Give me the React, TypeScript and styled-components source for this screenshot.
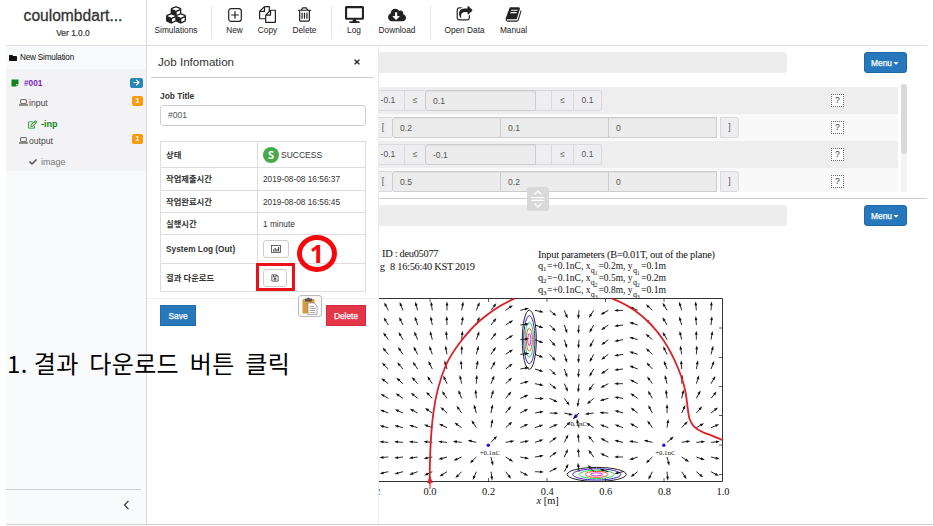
import React from 'react';
import styled, { createGlobalStyle } from 'styled-components';
import {
  FaCubes, FaDesktop, FaCloudDownloadAlt, FaFolder, FaStickyNote,
  FaArrowRight, FaRegEdit, FaCheck, FaTimes, FaRegSave, FaCaretDown,
} from 'react-icons/fa';

const GlobalStyle = createGlobalStyle`
  * { box-sizing: border-box; }
  body { margin: 0; background: #fff; color: #333; font: 8.6px/12px "Liberation Sans", "Noto Sans CJK KR", sans-serif; }
  svg { display: block; flex: none; }
`;

const Screen = styled.div`
  position: relative;
  width: 934px;
  height: 526px;
  display: flex;
  overflow: hidden;
  padding-left: 6px;
  border-right: 1px solid #d4d4d6;
`;
const Sidebar = styled.aside`
  width: 141px;
  height: 525px;
  flex: none;
  display: flex;
  flex-direction: column;
  background: #f9fafc;
  border-right: 1px solid #d9dae2;
  border-bottom: 1px solid #d0d0d2;
`;
const Brand = styled.header`
  height: 46px;
  background: #fff;
  border-bottom: 1px solid #dcdde4;
  text-align: center;
  padding: 6px 6px 0 0;
`;
const BrandName = styled.div`
  font-size: 15.6px;
  line-height: 19px;
  -webkit-text-stroke: 0.3px #333;
`;
const Version = styled.div`
  font-size: 8.4px;
  line-height: 16px;
  -webkit-text-stroke: 0.2px #333;
`;
const NewSimulation = styled.div`
  height: 23px;
  display: flex;
  align-items: center;
  gap: 3px;
  padding-left: 3px;
  font-size: 8.2px;
  letter-spacing: -0.2px;
  color: #111;
`;
const Tree = styled.nav`
  height: 102px;
  background: #f3f3f5;
  padding-top: 4px;
`;
const TreeRow = styled.div<{ $indent: number; $height: number; $gap?: number }>`
  height: ${p => p.$height}px;
  display: flex;
  align-items: center;
  gap: ${p => p.$gap ?? 1}px;
  padding: 0 3px 0 ${p => p.$indent}px;
`;
const TreeText = styled.span<{ $color: string; $bold?: boolean; $size?: number }>`
  flex: 1;
  color: ${p => p.$color};
  font-size: ${p => p.$size ?? 8.6}px;
  font-weight: ${p => (p.$bold ? 700 : 400)};
`;
const Badge = styled.span<{ $bg: string; $width: number }>`
  width: ${p => p.$width}px;
  height: 10px;
  margin-bottom: ${p => (p.$width > 12 ? 0 : 4)}px;
  border-radius: 2px;
  background: ${p => p.$bg};
  color: #fff;
  font-size: 7px;
  font-weight: 700;
  display: flex;
  align-items: center;
  justify-content: center;
`;
const Collapse = styled.div`
  margin: auto 5px 0 0;
  height: 35px;
  border-top: 1px solid #cfcfd1;
  display: flex;
  align-items: center;
  justify-content: flex-end;
  padding: 0 11px 4px 0;
`;
const Page = styled.div`
  flex: 1;
  height: 525px;
  display: flex;
  flex-direction: column;
  border-bottom: 1px solid #d0d0d2;
`;
const Toolbar = styled.div`
  height: 46px;
  width: 780px;
  flex: none;
  display: flex;
  align-items: center;
  border-bottom: 1px solid #dcdde4;
`;
const Tool = styled.div<{ $width: number }>`
  width: ${p => p.$width}px;
  display: flex;
  flex-direction: column;
  align-items: center;
  gap: 1px;
  padding-bottom: 3px;
  font-size: 8.3px;
  white-space: nowrap;
  color: #222;
`;
const IconSlot = styled.div`
  height: 17px;
  display: flex;
  align-items: center;
`;
const Rule = styled.div`
  width: 1px;
  height: 33px;
  background: #e4e4e6;
`;
const Body = styled.div`
  flex: 1;
  display: flex;
  min-height: 0;
`;
const JobPanel = styled.section`
  width: 232px;
  flex: none;
  border-right: 1px solid #ececee;
`;
const JobHead = styled.div`
  height: 32px;
  margin: 0 4px;
  padding: 0 13px 0 7px;
  border-bottom: 1px solid #cfcfd1;
  display: flex;
  align-items: center;
  justify-content: space-between;
  font-size: 11.6px;
`;
const JobBody = styled.div`
  padding: 12px 12px 0 13px;
`;
const Label = styled.div`
  font-weight: 700;
  font-size: 8.4px;
  height: 15px;
`;
const Field = styled.div`
  height: 21px;
  border: 1px solid #cfcfd1;
  border-radius: 3px;
  padding-left: 7px;
  line-height: 19px;
  color: #555;
`;
const InfoTable = styled.div`
  display: grid;
  grid-template-columns: 97px 1fr;
  grid-template-rows: 26px 23px 22px 22px 29px 28px;
  margin-top: 15px;
  border: 1px solid #dddde0;
  border-bottom: 0;
`;
const InfoCell = styled.div<{ $head?: boolean }>`
  border-bottom: 1px solid #dddde0;
  border-right: ${p => (p.$head ? '1px solid #dddde0' : '0')};
  padding-left: 5px;
  display: flex;
  align-items: center;
  gap: 2px;
  font-size: ${p => (p.$head ? 8.3 : 8.3)}px;
  font-weight: ${p => (p.$head ? 700 : 400)};
`;
const StatusDot = styled.span`
  width: 16px;
  height: 16px;
  border-radius: 50%;
  background: #43ab47;
  color: #fff;
  font: 700 11px/16px "Open Sans", sans-serif;
  text-align: center;
`;
const StatusText = styled.span`
  font-size: 8.5px;
`;
const SmallButton = styled.span<{ $width: number }>`
  width: ${p => p.$width}px;
  height: 18px;
  border: 1px solid #ccc;
  border-radius: 3px;
  display: flex;
  align-items: center;
  justify-content: center;
`;
const JobFoot = styled.div`
  margin-top: 6px;
  border-top: 1px solid #f0f0f0;
  padding: 6px 12px 0 13px;
  display: flex;
  justify-content: space-between;
`;
const Action = styled.button<{ $bg: string; $width: number }>`
  width: ${p => p.$width}px;
  height: 21px;
  border: 1px solid rgba(0, 0, 0, 0.1);
  background: ${p => p.$bg};
  color: #fff;
  font: 8.4px "Liberation Sans", sans-serif;
  padding: 0;
  -webkit-text-stroke: 0.25px #fff;
`;
const Main = styled.main`
  width: 548px;
  display: flex;
  flex-direction: column;
  min-width: 0;
`;
const PaneHead = styled.div`
  padding: 6px 20px 0 0;
  display: flex;
  justify-content: space-between;
`;
const PaneBar = styled.div`
  width: 408px;
  height: 21px;
  background: #ededed;
  border-radius: 0 3px 3px 0;
`;
const MenuButton = styled.button`
  width: 43px;
  height: 21px;
  border: 1px solid #1f68a8;
  border-radius: 3px;
  background: #2777bc;
  color: #fff;
  font: 8.4px "Liberation Sans", sans-serif;
  padding: 0;
  display: flex;
  align-items: center;
  justify-content: center;
  -webkit-text-stroke: 0.25px #fff;
`;
const ParamScroller = styled.div`
  height: 108px;
  margin: 11px 20px 0 0;
  display: flex;
  justify-content: space-between;
`;
const ParamRows = styled.div`
  width: 519px;
  padding-top: 3px;
  overflow: hidden;
`;
const ParamRow = styled.div<{ $odd: boolean }>`
  height: 27px;
  display: flex;
  align-items: center;
  background: ${p => (p.$odd ? '#eeeeee' : '#f9f9f9')};
`;
const Group = styled.div`
  width: 452px;
  display: flex;
`;
const Addon = styled.div<{ $width: number; $gap?: number; $first?: boolean; $end?: boolean; $pull?: number }>`
  width: ${p => p.$width}px;
  height: 21px;
  margin-left: ${p => p.$gap ?? 0}px;
  padding-right: ${p => p.$pull ?? 0}px;
  border: 1px solid #dadade;
  border-left-width: ${p => (p.$gap ? 1 : 0)}px;
  border-right-width: ${p => (p.$first ? 0 : 1)}px;
  border-radius: ${p => (p.$end ? '0 3px 3px 0' : 0)};
  background: #eeeef0;
  color: #555;
  line-height: 19px;
  text-align: center;
`;
const Value = styled.div<{ $width: number; $left?: boolean }>`
  width: ${p => p.$width}px;
  height: 21px;
  border: 1px solid #cdcdd0;
  border-left-width: ${p => (p.$left ? 1 : 0)}px;
  border-radius: ${p => (p.$left ? '3px 0 0 3px' : 0)};
  background: #ececec;
  box-shadow: inset 0 1px 1px rgba(0, 0, 0, 0.06);
  padding-left: 7px;
  line-height: 20px;
  color: #555;
`;
const Help = styled.span`
  width: 13px;
  height: 13px;
  border: 1px dotted #666;
  background: #fff;
  font-size: 8.6px;
  line-height: 11px;
  text-align: center;
`;
const Track = styled.div`
  width: 6px;
  background: #f3f3f3;
`;
const Thumb = styled.div`
  height: 70px;
  border-radius: 3px;
  background: #d9d9d9;
`;
const Divider = styled.div`
  height: 1px;
  flex: none;
  margin-top: 6px;
  background: #cfcfd1;
`;
const Handle = styled.div`
  position: absolute;
  left: 527px;
  top: 187px;
  width: 22px;
  height: 24px;
  border-radius: 3px;
  background: #d9d9d9;
`;
const Clipboard = styled.div`
  position: absolute;
  left: 298px;
  top: 295px;
  width: 24px;
  height: 22px;
  border: 1px solid #bbb;
  border-radius: 3px;
  background: #fafafa;
  display: flex;
  align-items: center;
  justify-content: center;
`;
const RedBox = styled.div`
  position: absolute;
  left: 256px;
  top: 263px;
  width: 39px;
  height: 28px;
  border: 3px solid #ee1018;
`;
const StepMark = styled.div`
  position: absolute;
  left: 297px;
  top: 235px;
  width: 40px;
  height: 37px;
  border: 5px solid #f6070c;
  border-radius: 50%;
  color: #f6070c;
  font: 700 25px/26px "Noto Sans", sans-serif;
  text-align: center;
`;
const Caption = styled.div`
  position: absolute;
  left: 7px;
  top: 346px;
  display: flex;
  gap: 6px;
  color: #000;
  font: 24px/34px "Noto Sans CJK KR", sans-serif;
  letter-spacing: 0.35px;
  word-spacing: 5px;
  white-space: nowrap;
`;

const TRASH = 'M704 736v576q0 14-9 23t-23 9h-64q-14 0-23-9t-9-23v-576q0-14 9-23t23-9h64q14 0 23 9t9 23zm256 0v576q0 14-9 23t-23 9h-64q-14 0-23-9t-9-23v-576q0-14 9-23t23-9h64q14 0 23 9t9 23zm256 0v576q0 14-9 23t-23 9h-64q-14 0-23-9t-9-23v-576q0-14 9-23t23-9h64q14 0 23 9t9 23zm128 724v-948h-896v948q0 22 7 40.500t14.500 27 10.500 8.500h832q3 0 10.500-8.500t14.500-27 7-40.500zm-672-1076h448l-48-117q-7-9-17-11h-317q-10 2-17 11zm928 32v64q0 14-9 23t-23 9h-96v948q0 83-47 143.500t-113 60.500h-832q-66 0-113-58.500t-47-141.500v-952h-96q-14 0-23-9t-9-23v-64q0-14 9-23t23-9h309l70-167q15-37 54-63t79-26h320q40 0 79 26t54 63l70 167h309q14 0 23 9t9 23z';
const FILES = 'M1696 384q40 0 68 28t28 68v1216q0 40-28 68t-68 28h-960q-40 0-68-28t-28-68v-288h-544q-40 0-68-28t-28-68v-672q0-40 20-88t48-76l408-408q28-28 76-48t88-20h416q40 0 68 28t28 68v328q68-40 128-40h416zm-544 213l-299 299h299v-299zm-640-384l-299 299h299v-299zm196 647l316-316v-416h-384v416q0 40-28 68t-68 28h-416v640h512v-256q0-40 20-88t48-76zm956 804v-1152h-384v416q0 40-28 68t-68 28h-416v640h896z';
const SHARE = 'M1472 989v259q0 119-84.500 203.500t-203.500 84.500h-832q-119 0-203.500-84.500t-84.500-203.500v-832q0-119 84.500-203.500t203.500-84.500h255q13 0 22.500 9.500t9.500 22.500q0 27-26 32-77 26-133 60-10 4-16 4h-112q-66 0-113 47t-47 113v832q0 66 47 113t113 47h832q66 0 113-47t47-113v-214q0-19 18-29 28-13 54-37 16-16 35-8 21 9 21 29zm237-496l-384 384q-18 19-45 19-12 0-25-5-39-17-39-59v-192h-160q-323 0-438 131-119 137-74 473 3 23-20 34-8 2-12 2-16 0-26-13-10-14-21-31t-39.500-68.500-49.500-99.500-38.500-114-17.500-122q0-49 3.500-91t14-90 28-88 47-81.500 68.500-74 94.500-61.500 124.500-48.500 159.500-30.500 196.500-11h160v-192q0-42 39-59 13-5 25-5 26 0 45 19l384 384q19 19 19 45t-19 45z';
const BOOK = 'M1703 478q40 57 18 129l-275 906q-19 64-76.500 107.500t-122.500 43.500h-923q-77 0-148.500-53.500t-99.500-131.500q-24-67-2-127 0-4 3-27t4-37q1-8-3-21.500t-3-19.500q2-11 8-21t16.500-23.500 16.500-23.500q23-38 45-91.500t30-91.500q3-10 .5-30t-.5-28q3-11 17-28t17-23q21-36 42-92t25-90q1-9-2.500-32t.5-28q4-13 22-30.500t22-22.500q19-26 42.500-84.500t27.500-96.500q1-8-3-25.500t-2-26.500q2-8 9-18t18-23 17-21q8-12 16.500-30.500t15-35 16-36 19.500-32 26.500-23.500 36-11.500 47.500 5.500l-1 3q38-9 51-9h761q74 0 114 56t18 130l-274 906q-36 119-71.500 153.500t-128.500 34.500h-869q-27 0-38 15-11 16-1 43 24 70 144 70h923q29 0 56-15.500t35-41.500l300-987q7-22 5-57 38 15 59 43zm-1064 2q-4 13 2 22.500t20 9.500h608q13 0 25.500-9.500t16.500-22.500l21-64q4-13-2-22.500t-20-9.500h-608q-13 0-25.500 9.500t-16.500 22.500zm-83 256q-4 13 2 22.500t20 9.500h608q13 0 25.500-9.500t16.500-22.500l21-64q4-13-2-22.500t-20-9.500h-608q-13 0-25.500 9.500t-16.500 22.500z';

const Glyph = ({ d, size }: { d: string; size: number }) => (
  <svg width={size} height={size} viewBox="0 0 1792 1792" fill="#222"><path d={d} /></svg>
);
const PlusSquare = () => (
  <svg width="14" height="14" viewBox="0 0 14 14" fill="none" stroke="#222" strokeWidth="1.200">
    <rect x="0.700" y="0.700" width="12.600" height="12.600" rx="2.400" /><path d="M7 3.200v7.600M3.200 7h7.600" />
  </svg>
);
const Laptop = () => (
  <svg width="9" height="7" viewBox="0 0 9 7" fill="none" stroke="#444" strokeWidth="0.8">
    <rect x="1.6" y="0.6" width="5.8" height="4" rx="0.5" /><path d="M0 6h9" strokeWidth="1.1" />
  </svg>
);

const tools = [
  { label: 'Simulations', gap: 0, width: 58, icon: <FaCubes size={20} color="#222" /> },
  { gap: 6 },
  { label: 'New', gap: 6, width: 33, icon: <PlusSquare /> },
  { label: 'Copy', gap: 0, width: 33, icon: <Glyph d={FILES} size={17} /> },
  { label: 'Delete', gap: 0, width: 41, icon: <Glyph d={TRASH} size={17} /> },
  { gap: 6 },
  { label: 'Log', gap: 6, width: 32, icon: <FaDesktop size={19} color="#222" /> },
  { label: 'Download', gap: 0, width: 54, icon: <FaCloudDownloadAlt size={18} color="#222" /> },
  { gap: 6 },
  { label: 'Open Data', gap: 5, width: 57, icon: <Glyph d={SHARE} size={17} /> },
  { label: 'Manual', gap: 0, width: 41, icon: <Glyph d={BOOK} size={17} /> },
];
const Spacer = styled.span<{ $width: number }>`
  width: ${p => p.$width}px;
`;

/* Plot geometry, in pixels of the page */
const charges = [
  { x: 488.3, y: 445.2, q: 1, label: '+0.1nC' },
  { x: 576, y: 416, q: -1, label: '-0.1nC' },
  { x: 663.8, y: 445.2, q: 1, label: '+0.1nC' },
];
const arrows = Array.from({ length: 23 * 12 }, (_, i) => {
  const x = 388.3 + (i % 23) * 14.67;
  const y = 471.7 - Math.floor(i / 23) * 14.67;
  let ex = 0;
  let ey = 0;
  charges.forEach(c => {
    const r = Math.hypot(x - c.x, y - c.y) ** 3;
    ex += (c.q * (x - c.x)) / r;
    ey += (c.q * (y - c.y)) / r;
  });
  return { x, y, angle: (Math.atan2(ey, ex) * 180) / Math.PI };
});
const rings = [
  ['#222', 29.5, 7], ['#3a22c8', 24, 5.6], ['#2fd45a', 17.5, 4.2], ['#e8642c', 11.5, 3], ['#e61ee0', 6, 1.5],
] as const;
const chargeLines = [
  { y: 268.5, n: '1', q: '=+0.1nC', x: '0.2m', v: '0.1m' },
  { y: 280.5, n: '2', q: '=−0.1nC', x: '0.5m', v: '0.2m' },
  { y: 292.7, n: '3', q: '=+0.1nC', x: '0.8m', v: '0.1m' },
];

const Plot = styled.svg`
  font-family: "Liberation Serif", serif;
  font-size: 10.4px;
  fill: #111;
`;

function FieldPlot() {
  return (
    <Plot width="548" height="298" viewBox="379 226 548 298">
      <text x="382" y="257" textLength="56.500">{'ID : deu05077'}</text>
      <text x="374" y="270" textLength="11">ug</text>
      <text x="390" y="270" textLength="85">8 16:56:40 KST 2019</text>
      <text x="538" y="257.500" textLength="177">Input parameters (B=0.01T, out of the plane)</text>
      {chargeLines.map(l => (
        <g key={l.n}>
          <text x="538" y={l.y}>q</text><text x="543" y={l.y + 2.5} fontSize="7">{l.n}</text>
          <text x="547" y={l.y} textLength="43.500" lengthAdjust="spacingAndGlyphs">{`${l.q}, x`}</text>
          <text x="590.700" y={l.y + 4} fontSize="8">q</text><text x="594.700" y={l.y + 6} fontSize="5.500">{l.n}</text>
          <text x="598.500" y={l.y} textLength="34" lengthAdjust="spacingAndGlyphs">{`=${l.x}, y`}</text>
          <text x="633" y={l.y + 4} fontSize="8">q</text><text x="637" y={l.y + 6} fontSize="5.500">{l.n}</text>
          <text x="641" y={l.y} textLength="25" lengthAdjust="spacingAndGlyphs">{`=${l.v}`}</text>
        </g>
      ))}
      <path d="M379 298.500H722.500V481.500H379" fill="none" stroke="#333" />
      {[430, 488.5, 547, 605.5, 664].map(x => (
        <path key={x} d={`M${x} 299v3M${x} 481v-3`} stroke="#333" strokeWidth="0.8" />
      ))}
      {[328, 357.5, 386.5, 415.5, 445, 474.5].map(y => (
        <path key={y} d={`M722 ${y}h-3`} stroke="#333" strokeWidth="0.8" />
      ))}
      {rings.map(([color, a, b]) => (
        <g key={color} fill="none" stroke={color} strokeWidth="1">
          <ellipse cx="529.300" cy="339.700" rx={b} ry={a} />
          <ellipse cx="596.700" cy="474.400" rx={a} ry={b} />
        </g>
      ))}
      {arrows.map((a, i) => (
        <g key={i} transform={`translate(${a.x} ${a.y}) rotate(${a.angle})`}>
          <path d="M0 0H6" stroke="#111" strokeWidth="0.85" />
          <path d="M8.900 0L4.900 -1.400V1.400Z" fill="#111" />
        </g>
      ))}
      <g fill="none" stroke="#da2228" strokeWidth="1.8">
        <path d="M429.700 484C429.700 465 430.500 435 433.300 413.300C435.500 396 440 379 446 365C453 350 468 331 480 320.500C490 312 503 303.500 514.500 298.700" />
        <path d="M612.300 298.700C634 307 651 322 663.300 340C674 356 683 378 685.500 392C687.300 402 687.500 410 689.300 418.300C691.500 425 694.500 428.500 703.300 432.300C710 435 716 437 722.500 440.300" />
      </g>
      <path d="M430 475.500L427.200 483H432.800ZM429.500 482h1v7h-1Z" fill="#da2228" />
      {charges.map(c => (
        <g key={c.x}>
          <circle cx={c.x} cy={c.y} r="1.700" fill="#2416d8" />
          <text x={c.x + 1.5} y={c.y + 9.5} fontSize="6.800" textAnchor="middle">{c.label}</text>
        </g>
      ))}
      {['0.0', '0.2', '0.4', '0.6', '0.8', '1.0'].map((t, i) => (
        <text key={t} x={430 + i * 58.6} y="495" textAnchor="middle">{t}</text>
      ))}
      <text x="375" y="495">2</text>
      <text x="536.500" y="504"><tspan fontStyle="italic">x</tspan> [m]</text>
    </Plot>
  );
}

const ScalarRow = ({ value }: { value: string }) => (
  <Group>
    <Addon $width={26} $pull={7}>-0.1</Addon>
    <Addon $width={20} $first>≤</Addon>
    <Value $width={111} $left>{value}</Value>
    <Addon $width={16} />
    <Addon $width={22}>≤</Addon>
    <Addon $width={28} $end>0.1</Addon>
  </Group>
);
const VectorRow = ({ values }: { values: string[] }) => (
  <Group>
    <Addon $width={13} $first $pull={5}>[</Addon>
    {values.map((v, i) => <Value key={i} $width={i === 0 ? 109 : 108} $left={i === 0}>{v}</Value>)}
    <Addon $width={19} $gap={3} $end>]</Addon>
  </Group>
);
const params = [
  <ScalarRow value="0.1" />,
  <VectorRow values={['0.2', '0.1', '0']} />,
  <ScalarRow value="-0.1" />,
  <VectorRow values={['0.5', '0.2', '0']} />,
];
const Menu = () => <MenuButton>Menu<FaCaretDown size={8} /></MenuButton>;

export default function App() {
  return (
    <Screen>
      <GlobalStyle />
      <Sidebar>
        <Brand>
          <BrandName>coulombdart...</BrandName>
          <Version>Ver 1.0.0</Version>
        </Brand>
        <NewSimulation><FaFolder size={8} />New Simulation</NewSimulation>
        <Tree>
          <TreeRow $indent={5} $height={19} $gap={5}>
            <FaStickyNote size={8} color="#12851a" />
            <TreeText $color="#7a1fc4" $bold $size={8.3}>#001</TreeText>
            <Badge $bg="#2b86b8" $width={13}><FaArrowRight size={7} /></Badge>
          </TreeRow>
          <TreeRow $indent={13} $height={21}>
            <Laptop /><TreeText $color="#444">input</TreeText><Badge $bg="#fb9a0c" $width={11}>1</Badge>
          </TreeRow>
          <TreeRow $indent={22} $height={22} $gap={4}>
            <FaRegEdit size={9} color="#12851a" /><TreeText $color="#12851a" $bold $size={9}>-inp</TreeText>
          </TreeRow>
          <TreeRow $indent={13} $height={11}>
            <Laptop /><TreeText $color="#444">output</TreeText><Badge $bg="#fb9a0c" $width={11}>1</Badge>
          </TreeRow>
          <TreeRow $indent={23} $height={31} $gap={4}>
            <FaCheck size={8} color="#555" /><TreeText $color="#777" $size={9}>image</TreeText>
          </TreeRow>
        </Tree>
        <Collapse>
          <svg width="7" height="10" viewBox="0 0 7 10" fill="none" stroke="#333" strokeWidth="1.200"><path d="M5.500 0.800L1.500 5L5.500 9.200" /></svg>
        </Collapse>
      </Sidebar>
      <Page>
        <Toolbar>
          {tools.map((t, i) => (
            <React.Fragment key={i}>
              <Spacer $width={t.gap} />
              {t.label ? <Tool $width={t.width ?? 0}><IconSlot>{t.icon}</IconSlot>{t.label}</Tool> : <Rule />}
            </React.Fragment>
          ))}
        </Toolbar>
        <Body>
          <JobPanel>
            <JobHead>Job Infomation<FaTimes size={8} /></JobHead>
            <JobBody>
              <Label>Job Title</Label>
              <Field>#001</Field>
              <InfoTable>
                <InfoCell $head>상태</InfoCell>
                <InfoCell><StatusDot>S</StatusDot><StatusText>SUCCESS</StatusText></InfoCell>
                <InfoCell $head>작업제출시간</InfoCell><InfoCell>2019-08-08 16:56:37</InfoCell>
                <InfoCell $head>작업완료시간</InfoCell><InfoCell>2019-08-08 16:56:45</InfoCell>
                <InfoCell $head>실행시간</InfoCell><InfoCell>1 minute</InfoCell>
                <InfoCell $head>System Log (Out)</InfoCell>
                <InfoCell>
                  <SmallButton $width={26}>
                    <svg width="10" height="8" viewBox="0 0 10 8" fill="none" stroke="#444">
                      <rect x="0.500" y="0.500" width="9" height="7" strokeWidth="0.800" />
                      <path d="M2.500 6.500V4.500M4.200 6.500V3M5.900 6.500V3.800M7.600 6.500V2" strokeWidth="1.100" />
                    </svg>
                  </SmallButton>
                </InfoCell>
                <InfoCell $head>결과 다운로드</InfoCell>
                <InfoCell><SmallButton $width={24}><FaRegSave size={8} /></SmallButton></InfoCell>
              </InfoTable>
            </JobBody>
            <JobFoot>
              <Action $bg="#2777bc" $width={36}>Save</Action>
              <Action $bg="#e53548" $width={40}>Delete</Action>
            </JobFoot>
          </JobPanel>
          <Main>
            <PaneHead><PaneBar /><Menu /></PaneHead>
            <ParamScroller>
              <ParamRows>
                {params.map((p, i) => <ParamRow key={i} $odd={i % 2 === 0}>{p}<Help>?</Help></ParamRow>)}
              </ParamRows>
              <Track><Thumb /></Track>
            </ParamScroller>
            <Divider />
            <PaneHead><PaneBar /><Menu /></PaneHead>
            <FieldPlot />
          </Main>
        </Body>
      </Page>
      <Handle>
        <svg width="22" height="24" viewBox="0 0 22 24" fill="none" stroke="#fff" strokeWidth="1.300">
          <path d="M7.500 7.500L11 4L14.500 7.500M7.500 16.500L11 20L14.500 16.500M4.500 10.700H17.500M4.500 13.300H17.500" />
        </svg>
      </Handle>
      <Clipboard>
        <svg width="16" height="18" viewBox="0 0 16 18">
          <rect x="0.500" y="2" width="12" height="14.500" rx="1" fill="#d99a3c" />
          <path d="M3 1.500H5Q6.500 -0.500 8 1.500H10V4.500H3Z" fill="#555" />
          <path d="M6 6H12L15 9V17.500H6Z" fill="#fff" stroke="#888" strokeWidth="0.700" />
          <path d="M7.500 9.500H12M7.500 11.500H13.500M7.500 13.500H13.500M7.500 15.500H13.500" stroke="#888" strokeWidth="0.700" />
        </svg>
      </Clipboard>
      <RedBox />
      <StepMark>1</StepMark>
      <Caption><span>1.</span><span>결과 다운로드 버튼 클릭</span></Caption>
    </Screen>
  );
}
